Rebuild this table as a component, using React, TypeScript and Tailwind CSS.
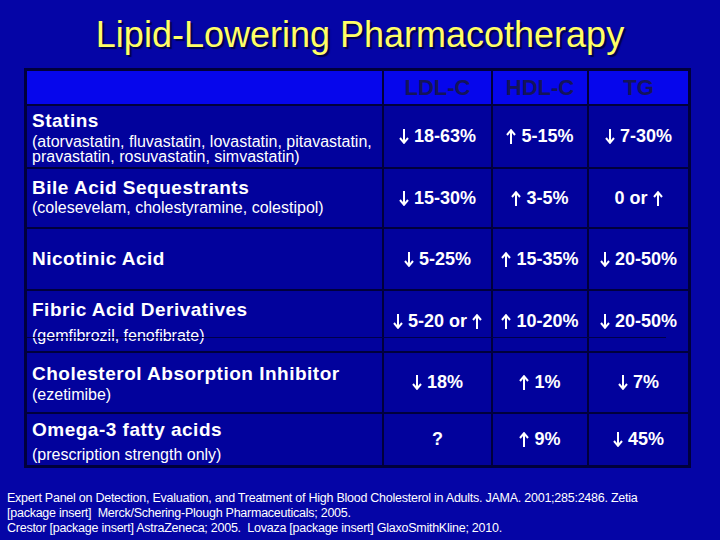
type Part = 'u' | 'd' | string;

interface Row {
  title: string;
  sub: string[];
  cell: string;
  subGap: string;
  ldl: Part[];
  hdl: Part[];
  tg: Part[];
}

const rows: Row[] = [
  {
    title: 'Statins',
    sub: ['(atorvastatin, fluvastatin, lovastatin, pitavastatin,', 'pravastatin, rosuvastatin, simvastatin)'],
    cell: 'h-[61px] pt-[4px]',
    subGap: 'mt-[2px]',
    ldl: ['d', '18-63%'],
    hdl: ['u', '5-15%'],
    tg: ['d', '7-30%'],
  },
  {
    title: 'Bile Acid Sequestrants',
    sub: ['(colesevelam, cholestyramine, colestipol)'],
    cell: 'h-[58px] pt-[8px]',
    subGap: 'mt-[1px]',
    ldl: ['d', '15-30%'],
    hdl: ['u', '3-5%'],
    tg: ['0 or', 'u'],
  },
  {
    title: 'Nicotinic Acid',
    sub: [],
    cell: 'h-[60px] justify-center',
    subGap: '',
    ldl: ['d', '5-25%'],
    hdl: ['u', '15-35%'],
    tg: ['d', '20-50%'],
  },
  {
    title: 'Fibric Acid Derivatives',
    sub: ['(gemfibrozil, fenofibrate)'],
    cell: 'h-[60px] pt-[8px]',
    subGap: 'mt-[7px]',
    ldl: ['d', '5-20 or', 'u'],
    hdl: ['u', '10-20%'],
    tg: ['d', '20-50%'],
  },
  {
    title: 'Cholesterol Absorption Inhibitor',
    sub: ['(ezetimibe)'],
    cell: 'h-[59px] pt-[10px]',
    subGap: 'mt-[2px]',
    ldl: ['d', '18%'],
    hdl: ['u', '1%'],
    tg: ['d', '7%'],
  },
  {
    title: 'Omega-3 fatty acids',
    sub: ['(prescription strength only)'],
    cell: 'h-[51px] pt-[5px]',
    subGap: 'mt-[6px]',
    ldl: ['?'],
    hdl: ['u', '9%'],
    tg: ['d', '45%'],
  },
];

function Arrow({ dir }: { dir: 'u' | 'd' }) {
  return (
    <svg width="10" height="15" viewBox="0 0 10 15" className="shrink-0">
      {dir === 'd' ? (
        <>
          <line x1="5" y1="0" x2="5" y2="13.5" stroke="white" strokeWidth="2" />
          <polyline points="1,9 5,13.8 9,9" fill="none" stroke="white" strokeWidth="2" />
        </>
      ) : (
        <>
          <line x1="5" y1="1.5" x2="5" y2="15" stroke="white" strokeWidth="2" />
          <polyline points="1,6 5,1.2 9,6" fill="none" stroke="white" strokeWidth="2" />
        </>
      )}
    </svg>
  );
}

function Value({ parts }: { parts: Part[] }) {
  return (
    <div className="flex items-center justify-center gap-[5px] bg-[#02029c] text-[18px] font-bold text-white">
      {parts.map((p, i) =>
        p === 'u' || p === 'd' ? <Arrow key={i} dir={p} /> : <span key={i}>{p}</span>,
      )}
    </div>
  );
}

export default function App() {
  return (
    <div className="h-[540px] w-[720px] overflow-hidden bg-[#0505a6] font-['Liberation_Sans',Arial,sans-serif]">
      <h1 className="pt-[14px] text-center text-[36px] leading-[41px] text-[#ffff66] [text-shadow:2px_2px_1px_#00004a]">
        Lipid-Lowering Pharmacotherapy
      </h1>

      <div className="relative ml-[24px] mt-[13px] grid w-[667px] grid-cols-[355px_107px_94px_99px] gap-[2px] border-[3px] border-[#00003c] bg-[#00003c]">
        <div className="h-[33px] bg-[#0606ec]" />
        {['LDL-C', 'HDL-C', 'TG'].map((h) => (
          <div key={h} className="flex h-[33px] items-center justify-center bg-[#0606ec] text-[22px] font-bold text-[#14145a]">
            {h}
          </div>
        ))}

        {rows.map((r) => (
          <div key={r.title} className="contents">
            <div className={`flex flex-col bg-[#02029c] pl-[5px] text-white ${r.cell}`}>
              <div className="text-[19px] font-bold leading-[22px] tracking-[0.5px]">{r.title}</div>
              {r.sub.length > 0 && (
                <div className={`text-[16px] leading-[15px] ${r.subGap}`}>
                  {r.sub.map((s) => (
                    <div key={s}>{s}</div>
                  ))}
                </div>
              )}
            </div>
            <Value parts={r.ldl} />
            <Value parts={r.hdl} />
            <Value parts={r.tg} />
          </div>
        ))}

        {/* stray rule from the original slide, through the fibric row */}
        <div className="pointer-events-none absolute left-0 top-[266px] h-px w-[639px] bg-[#00004a]" />
      </div>

      <div className="mt-[23px] pl-[7px] text-[12.5px] leading-[15px] tracking-[-0.25px] text-white">
        <div>Expert Panel on Detection, Evaluation, and Treatment of High Blood Cholesterol in Adults. JAMA. 2001;285:2486. Zetia</div>
        <div>[package insert]&nbsp; Merck/Schering-Plough Pharmaceuticals; 2005.</div>
        <div>Crestor [package insert] AstraZeneca; 2005.&nbsp; Lovaza [package insert] GlaxoSmithKline; 2010.</div>
      </div>
    </div>
  );
}
